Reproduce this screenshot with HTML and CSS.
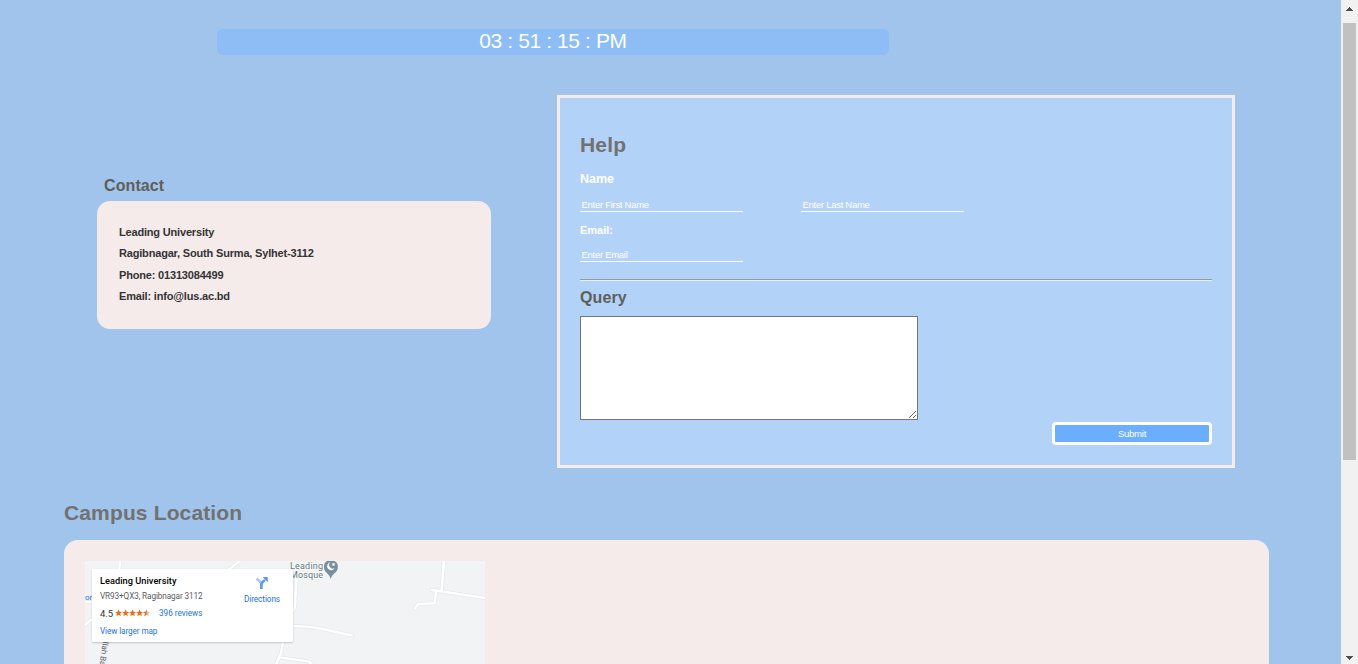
FILE: index.html
```html
<!DOCTYPE html>
<html lang="en">
<head>
<meta charset="utf-8">
<title>Contact and Help</title>
<link rel="stylesheet" href="styles.css">
</head>
<body>
<main class="page">
  <div class="clock">03 : 51 : 15 : PM</div>
  <div class="columns">
    <section class="contact">
      <h3 class="contact-title">Contact</h3>
      <div class="contact-card">
        <p class="line">Leading University</p>
        <p class="line">Ragibnagar, South Surma, Sylhet-3112</p>
        <p class="line">Phone: 01313084499</p>
        <p class="line">Email: info@lus.ac.bd</p>
      </div>
    </section>
    <form class="help">
      <h2 class="help-title">Help</h2>
      <label class="label name-label">Name</label>
      <div class="names">
        <input class="field" placeholder="Enter First Name">
        <input class="field" placeholder="Enter Last Name">
      </div>
      <label class="label email-label">Email:</label>
      <input class="field" placeholder="Enter Email">
      <div class="rule"></div>
      <h3 class="query-title">Query</h3>
      <textarea class="query"></textarea>
      <button class="submit" type="button">Submit</button>
    </form>
  </div>
  <h2 class="campus-title">Campus Location</h2>
  <section class="campus">
    <div class="map">
      <svg class="roads" width="400" height="103" viewBox="0 0 400 103" fill="none" stroke-linejoin="round" stroke-linecap="round">
        <g stroke="#e3e5e8" stroke-width="3.800">
          <path id="net" d="M35.500 -2L34 10M143 9L160 -4M-3 66L10 56M-2 41H8M211.700 12L210 46L203 58M205 65Q223 65 235 67.500L267 74.500M198.500 78L196 92L190 106M195.500 96.500L224 100.500L229 106M359 -2L356.700 29M347 29L403 37.500M351 30L349.500 42.300L333 43L330 48"/>
        </g>
        <use href="#net" stroke="#fff" stroke-width="2.600"/>
        <path d="M245.800 18C244.500 12.500 239 11.500 239 6.500V4Q240 1 242 0H249.500Q252 1 252.800 4V6.500C252.800 11.500 247 12.500 245.800 18Z" fill="#78909c"/>
        <path d="M245.600 1.200A4 4 0 1 0 249.800 6.800A3.300 3.300 0 0 1 245.600 1.200Z" fill="#fff"/>
        <path d="M247.300 2.200h2.400v2.400h-2.400z" fill="#fff"/>
        <g class="place">
          <text x="205" y="8" textLength="33">Leading</text>
          <text x="205" y="17" textLength="33">Mosque</text>
        </g>
        <text class="edge" x="0" y="39">or</text>
        <text class="street" transform="translate(18.500 76) rotate(98)">ullah Ba</text>
      </svg>
      <div class="place-card">
        <div class="place-info">
          <div class="place-name">Leading University</div>
          <div class="address">VR93+QX3, Ragibnagar 3112</div>
          <div class="rating"><span class="score">4.5</span>
            <svg width="36" height="8" viewBox="0 0 36 8">
              <defs><path id="star" d="M3.600 .2L4.600 2.700L7.200 2.900L5.200 4.600L5.900 7.300L3.600 5.800L1.300 7.300L2 4.600L0 2.900L2.600 2.700Z"/></defs>
              <g fill="#e7711b"><use href="#star"/><use href="#star" x="7"/><use href="#star" x="14"/><use href="#star" x="21"/></g>
              <use href="#star" x="28" fill="#c9c2bd"/>
              <path d="M31.600 .2V5.800L29.300 7.300L30 4.600L28 2.900L30.600 2.700Z" fill="#e7711b"/>
            </svg>
            <span class="reviews">396 reviews</span></div>
          <div class="larger">View larger map</div>
        </div>
        <div class="directions">
          <svg width="14" height="14" viewBox="0 0 14 14" fill="none">
            <path d="M1.500 2.500L6 6.500Q6.500 7.500 6.500 9" stroke="#a9c8f6" stroke-width="2.700"/>
            <path d="M6.300 13V8.500Q6.500 6.500 10 4" stroke="#5f9be9" stroke-width="2.700"/>
            <path d="M7.500 1H12.800V6.300Z" fill="#5f9be9"/>
          </svg>
          <span>Directions</span>
        </div>
      </div>
    </div>
  </section>
</main>
<aside class="scrollbar">
  <svg width="17" height="17" viewBox="0 0 17 17"><path d="M5 11h7v-1h-1v-1h-1v-1h-1v-1h-1v1h-1v1h-1v1h-1z" fill="#505050"/></svg>
  <div class="thumb"></div>
  <svg class="down" width="17" height="17" viewBox="0 0 17 17"><path d="M5 9h7v1h-1v1h-1v1h-1v1h-1v-1h-1v-1h-1v-1h-1z" fill="#505050"/></svg>
</aside>
</body>
</html>
```
FILE: styles.css
```css
* { box-sizing: border-box; }
body {
  margin: 0;
  height: 664px;
  overflow: hidden;
  display: flex;
  font-family: "Liberation Sans", Arial, sans-serif;
}
h2, h3, p { margin: 0; }
.page {
  width: 1341px;
  height: 664px;
  overflow: hidden;
  background: #a1c4ec;
  padding-top: 29px;
}
.clock {
  width: 672px;
  height: 26px;
  margin-left: 217px;
  border-radius: 6px;
  background: #8dbdf4;
  color: #fff;
  font-size: 21px;
  letter-spacing: -0.4px;
  line-height: 24px;
  text-align: center;
}
.columns { display: flex; margin-top: 40px; padding-left: 97px; height: 373px; }
.contact { width: 394px; margin: 81px 66px 0 0; }
.contact-title {
  padding: 1px 0 0 7px;
  font-size: 16px;
  letter-spacing: 0.1px;
  line-height: 18px;
  height: 25px;
  color: #5f5f5a;
}
.contact-card {
  height: 128px;
  padding: 21px 22px;
  border-radius: 13px;
  background: #f5ebeb;
}
.line { font-size: 11px; font-weight: bold; line-height: 21.4px; letter-spacing: -0.18px; color: #333; }
.help {
  width: 678px;
  height: 373px;
  border: 3px solid #f5ebeb;
  background: #b3d2f7;
  padding: 35px 20px 0;
  display: flex;
  flex-direction: column;
}
.help-title { font-size: 21px; line-height: 24px; letter-spacing: 0.2px; color: #717171; }
.label { color: #fff; font-weight: bold; }
.name-label { font-size: 12.5px; line-height: 14px; margin-top: 15px; }
.email-label { font-size: 11px; line-height: 14px; margin-top: 11px; }
.names { display: flex; gap: 58px; margin-top: 12px; }
.email-label + .field { margin-top: 11px; }
.field {
  width: 163px;
  height: 14px;
  border: 0;
  border-bottom: 1px solid #fff;
  background: transparent;
  padding: 0 1.5px;
  font: 9.5px "Liberation Sans", Arial, sans-serif;
  letter-spacing: -0.28px;
}
.field::placeholder { color: #fff; opacity: 1; }
.rule { height: 2px; margin-top: 17px; border-top: 1px solid #8c9caf; border-bottom: 1px solid #eeeeee; }
.query-title { margin-top: 7px; font-size: 16px; line-height: 19px; letter-spacing: 0.1px; color: #5f5f5a; }
.query {
  width: 338px;
  height: 104px;
  margin-top: 9px;
  border: 1px solid #767676;
  background: #fff;
  flex: none;
}
.submit {
  width: 160px;
  height: 23px;
  margin-top: 2px;
  padding: 0;
  align-self: flex-end;
  border: 3px solid #fff;
  border-radius: 4px;
  background: #6baefd;
  color: #fff;
  font: 9.5px "Liberation Sans", Arial, sans-serif;
  letter-spacing: -0.25px;
}
.campus-title { margin: 33px 0 0 64px; font-size: 21px; line-height: 24px; letter-spacing: 0.14px; color: #717171; }
.campus {
  width: 1205px;
  height: 180px;
  margin: 15px 0 0 64px;
  padding: 21px;
  border-radius: 14px;
  background: #f5ebeb;
}
.map { position: relative; width: 400px; height: 103px; background: #f1f3f4; overflow: hidden; }
.roads { display: block; }
.place { font: 9px Roboto, sans-serif; fill: #607580; stroke: #fff; stroke-width: 1px; paint-order: stroke; }
.edge { font: 8px Roboto, sans-serif; fill: #1a73e8; }
.street { font: 8px Roboto, sans-serif; fill: #5b6066; }
.place-card {
  position: absolute;
  left: 7px;
  top: 8px;
  width: 201px;
  height: 73px;
  display: flex;
  justify-content: space-between;
  padding: 6px 13px 0 8px;
  background: #fff;
  border-radius: 1px;
  box-shadow: 0 1px 2px rgba(0, 0, 0, 0.2);
  font: 8.2px Roboto, sans-serif;
  color: #5b5b5b;
}
.place-name { font-size: 9.2px; font-weight: 500; line-height: 12px; color: #000; letter-spacing: 0.04px; }
.address { line-height: 10px; margin-top: 4px; white-space: nowrap; letter-spacing: -0.1px; }
.rating { display: flex; align-items: center; height: 12px; margin-top: 6px; }
.score { font-size: 9.5px; width: 15px; color: #333; }
.reviews { margin-left: 8px; color: #1a73e8; }
.larger { line-height: 10px; margin-top: 7px; color: #1a73e8; letter-spacing: -0.1px; }
.directions { display: flex; flex-direction: column; align-items: center; color: #1a73e8; padding-top: 1px; }
.directions span { line-height: 10px; margin-top: 4px; letter-spacing: -0.08px; }
.scrollbar { width: 17px; height: 664px; background: #f1f1f1; display: flex; flex-direction: column; }
.scrollbar svg { display: block; flex: none; }
.thumb { width: 13px; height: 437px; margin: 6px 0 0 2px; background: #c1c1c1; }
.down { margin-top: auto; }
```
